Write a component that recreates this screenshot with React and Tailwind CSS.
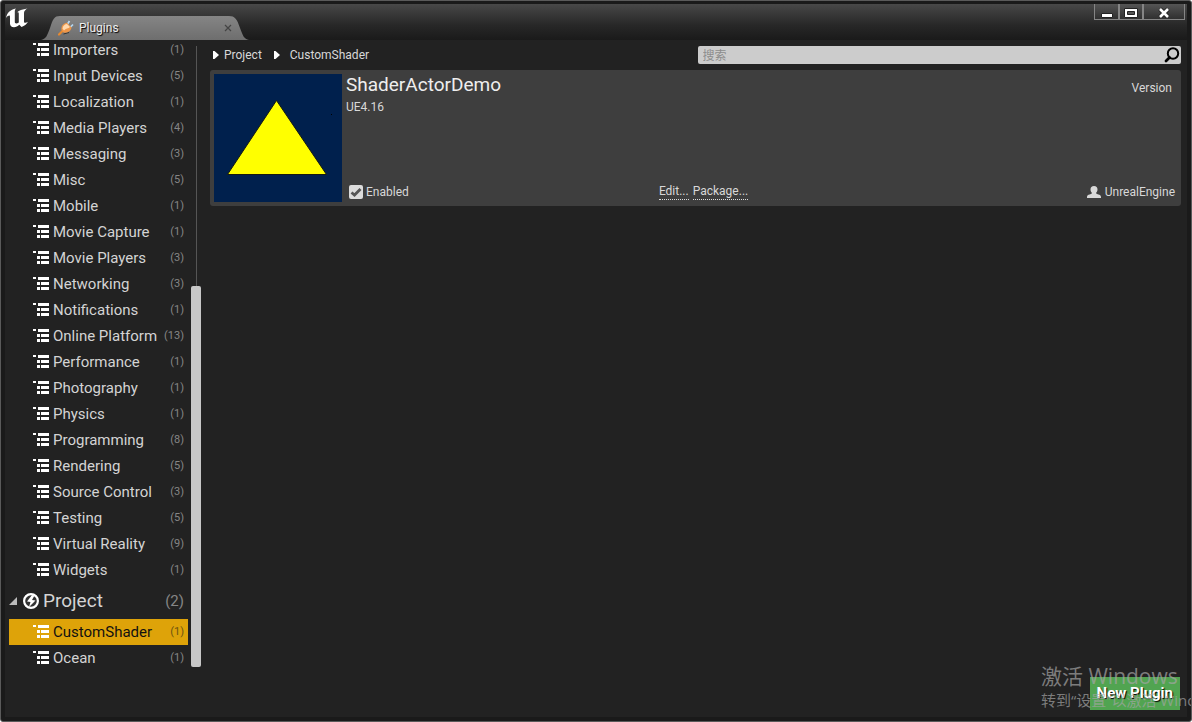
import React from 'react';

const categories = [
  ['Importers', 1],
  ['Input Devices', 5],
  ['Localization', 1],
  ['Media Players', 4],
  ['Messaging', 3],
  ['Misc', 5],
  ['Mobile', 1],
  ['Movie Capture', 1],
  ['Movie Players', 3],
  ['Networking', 3],
  ['Notifications', 1],
  ['Online Platform', 13],
  ['Performance', 1],
  ['Photography', 1],
  ['Physics', 1],
  ['Programming', 8],
  ['Rendering', 5],
  ['Source Control', 3],
  ['Testing', 5],
  ['Virtual Reality', 9],
  ['Widgets', 1],
];

function ListIcon() {
  return (
    <svg className="h-4 w-4 shrink-0" viewBox="0 0 16 16" fill="#fff" shapeRendering="crispEdges" aria-hidden="true">
      <path d="M0 1h3v2H0zM5 1h11v3H5zM4 6h3v3H4zM8 6h8v3H8zM4 11h3v3H4zM8 11h8v3H8z" />
    </svg>
  );
}

function CategoryRow({ name, count, selected }) {
  return (
    <li>
      <button
        type="button"
        aria-pressed={!!selected}
        className={
          'flex h-[26px] w-full items-center pl-6 pr-1 text-left ' +
          (selected ? 'bg-[#dea309] text-[#111]' : 'text-[#d4d4d4]')
        }
      >
        <ListIcon />
        <span className="ml-1 grow whitespace-nowrap text-[15px] leading-5">{name}</span>
        <span className={'text-[11px] ' + (selected ? 'text-[#6d5410]' : 'text-[#868686]')}>({count})</span>
      </button>
    </li>
  );
}

function Logo() {
  return (
    <svg className="h-6 w-6 shrink-0" viewBox="0 0 24 24" aria-label="Unreal Engine" role="img">
      <path
        fill="#fff"
        d="M1 10C2 5 5 1.500 11 0.500C10 1.500 9.800 2.500 9.800 4V14C10 15.700 11.500 16 13.800 14.500V5.500C13.800 4.300 13.200 4 12.200 4.200C14 2.500 17 1.500 22.500 0.500C20.500 1.500 19 3 19 5V13.500C19 15 20 15.500 23 13.800C21.500 16.500 19.500 18 16.500 19L14.300 16.800C12.800 18.300 11 19.300 9 19.300C6.500 19.300 5 17.800 5 15.500V9C5 7 3.500 7 1 10Z"
      />
    </svg>
  );
}

function PlugIcon() {
  return (
    <svg className="h-4 w-4 shrink-0" viewBox="0 0 16 16" aria-hidden="true">
      <path d="M9.500 4l2-3M12.500 7l2.500-2.500" stroke="#b5d8f2" strokeWidth="1.700" />
      <path d="M1 14.500L5 10.500" stroke="#e8892f" strokeWidth="2.200" strokeLinecap="round" />
      <path d="M5.500 14L11 12.500" stroke="#333" strokeWidth="1" />
      <path d="M3.500 10C2.800 6 5.500 3.200 9 2.800L13.500 7.500C13 11 9.500 13.500 5.500 12.500Z" fill="#ee9648" />
      <path d="M4.500 8.500C5 5.500 7 4.200 9 4L12 7C10.500 8.500 7.500 8.500 6 10.500Z" fill="#ffd9ae" />
    </svg>
  );
}

const controlClass =
  'flex h-4 items-center justify-center border border-t-0 border-[#858585] bg-linear-to-b from-[#555] to-[#303030]';

function TitleBar() {
  return (
    <header className="flex h-9 shrink-0 items-start bg-linear-to-b from-[#484848] via-[#272727] via-60% to-[#1a1a1a]">
      <div className="pt-1">
        <Logo />
      </div>
      <div className="relative ml-3 mt-3 flex h-6 w-[208px] items-center pl-[17px] pr-[15px]">
        <svg className="absolute inset-0 h-full w-full" viewBox="0 0 208 24" preserveAspectRatio="none" aria-hidden="true">
          <defs>
            <linearGradient id="tabFill" x2="0" y2="1">
              <stop stopColor="#858585" />
              <stop offset="1" stopColor="#6e6e6e" />
            </linearGradient>
          </defs>
          <path d="M0 24C5 23 6 20 9 12C12 3 13 0 19 0H188C194 0 196 3 199 12C202 20 203 23 208 24Z" fill="url(#tabFill)" />
        </svg>
        <div className="relative flex w-full items-center">
          <PlugIcon />
          <span className="ml-[5px] grow text-xs text-[#eee] [text-shadow:1px_1px_1px_#000]">Plugins</span>
          <button type="button" aria-label="Close tab" className="flex h-3 w-3 items-center justify-center">
            <svg className="h-2 w-2" viewBox="0 0 8 8" stroke="#444" strokeWidth="1.200" aria-hidden="true">
              <path d="M1 1L7 7M7 1L1 7" />
            </svg>
          </button>
        </div>
      </div>
      <div className="ml-auto mr-[2px] flex">
        <button type="button" aria-label="Minimize" className={controlClass + ' w-[25px]'}>
          <svg className="h-3 w-4" viewBox="0 0 16 12" aria-hidden="true">
            <path d="M2.500 7.500h11v4h-11z" fill="#fff" stroke="#222" />
          </svg>
        </button>
        <button type="button" aria-label="Maximize" className={controlClass + ' w-6'}>
          <svg className="h-3 w-4" viewBox="0 0 16 12" aria-hidden="true">
            <path d="M1.500 2.500h13v9h-13z" fill="#fff" stroke="#222" />
            <path d="M4.500 5.500h7v3h-7z" fill="#555" stroke="#222" />
          </svg>
        </button>
        <button type="button" aria-label="Close" className={controlClass + ' w-[42px]'}>
          <svg className="h-3 w-4" viewBox="0 0 16 12" aria-hidden="true">
            <path d="M4 3L12 11M12 3L4 11" stroke="#222" strokeWidth="4.500" />
            <path d="M4 3L12 11M12 3L4 11" stroke="#fff" strokeWidth="2.600" />
          </svg>
        </button>
      </div>
    </header>
  );
}

function Sidebar() {
  return (
    <nav aria-label="Plugin categories" className="flex shrink-0 gap-[3px] pl-1">
      <div className="w-[179px]">
        <ul className="-mt-[3px]">
          {categories.map(([name, count]) => (
            <CategoryRow key={name} name={name} count={count} />
          ))}
        </ul>
        <button type="button" aria-expanded="true" className="flex h-9 w-full items-center pr-1 text-left">
          <svg className="h-2 w-2 shrink-0" viewBox="0 0 8 8" fill="#bbb" aria-hidden="true">
            <path d="M8 0V8H0Z" />
          </svg>
          <svg className="ml-[6px] h-4 w-4 shrink-0" viewBox="0 0 16 16" aria-hidden="true">
            <circle cx="8" cy="8" r="6.900" fill="#333" stroke="#fff" strokeWidth="2.200" />
            <path d="M9 2L4 8.500L7.500 9L6 14L12.500 7.500L9 7L11.500 2.500Z" fill="#fff" />
          </svg>
          <span className="ml-1 grow text-[19px] leading-6 text-[#d4d4d4]">Project</span>
          <span className="text-[15px] text-[#868686]">(2)</span>
        </button>
        <ul>
          <CategoryRow name="CustomShader" count={1} selected />
          <CategoryRow name="Ocean" count={1} />
        </ul>
      </div>
      <div className="mt-[6px] flex w-[10px] flex-col items-center" aria-hidden="true">
        <div className="w-px grow bg-[#555]" />
        <div className="mb-1 h-[381px] w-full rounded-[2px] bg-[#c8c8c8]" />
      </div>
    </nav>
  );
}

function Arrow() {
  return (
    <svg className="h-2 w-[6px] shrink-0" viewBox="0 0 6 8" fill="#fff" aria-hidden="true">
      <path d="M0 0H1.500L6 4L1.500 8H0Z" />
    </svg>
  );
}

function PluginCard() {
  return (
    <article className="flex gap-1 rounded-[3px] bg-[#3e3e3e] p-1 text-xs text-[#d8d8d8]">
      <svg className="h-32 w-32 shrink-0" viewBox="0 0 128 128" role="img" aria-label="Plugin thumbnail">
        <path d="M0 0H128V128H0Z" fill="#00204d" />
        <path d="M62.500 26.500L112.500 100.500H13.500Z" fill="#ff0" stroke="#151a10" strokeWidth="1" />
        <path d="M117 40h1v1h-1z" fill="#000" />
      </svg>
      <div className="flex grow flex-col justify-between">
        <div className="flex justify-between">
          <div>
            <h1 className="text-[19px] leading-[22px] text-[#eee]">ShaderActorDemo</h1>
            <p className="mt-[3px] leading-4">UE4.16</p>
          </div>
          <span className="mr-[5px] mt-[6px] leading-4">Version</span>
        </div>
        <div className="grid grid-cols-[3fr_3fr_2fr] items-center pb-[2px] pr-[2px] leading-4">
          <label className="ml-[3px] flex items-center gap-[3px]">
            <span className="relative flex h-[14px] w-[14px]">
              <input type="checkbox" defaultChecked className="peer h-[14px] w-[14px] appearance-none rounded-[2px] bg-[#dcdcdc]" />
              <svg className="pointer-events-none absolute inset-0 hidden h-[14px] w-[14px] peer-checked:block" viewBox="0 0 14 14" fill="none" stroke="#555" strokeWidth="2.800" aria-hidden="true">
                <path d="M2.500 7.500L5.500 10L11.500 4" />
              </svg>
            </span>
            Enabled
          </label>
          <div className="flex gap-1 pl-[2px] leading-[15px]">
            <a href="#edit" className="border-b border-dotted border-[#ddd]">Edit...</a>
            <a href="#package" className="border-b border-dotted border-[#ddd]">Package...</a>
          </div>
          <div className="flex items-center justify-end gap-1">
            <svg className="h-3 w-[14px]" viewBox="0 0 14 12" fill="#d8d8d8" aria-hidden="true">
              <path d="M7 0C9.300 0 10.500 1.500 10.500 3.500C10.500 5 9.800 6.300 9 7C9 8.500 14 8 14 11V12H0V11C0 8 5 8.500 5 7C4.200 6.300 3.500 5 3.500 3.500C3.500 1.500 4.700 0 7 0Z" />
            </svg>
            UnrealEngine
          </div>
        </div>
      </div>
    </article>
  );
}

function Main() {
  return (
    <main className="flex min-w-0 grow flex-col gap-[5px] pl-[9px] pr-[6px] pt-[5px]">
      <div className="flex h-5 items-center justify-between">
        <nav aria-label="Breadcrumb" className="flex items-center pl-[3px] text-xs text-[#d8d8d8]">
          <Arrow />
          <a href="#project" className="ml-[5px] mr-3">Project</a>
          <Arrow />
          <a href="#customshader" className="ml-[10px]">CustomShader</a>
        </nav>
        <label className="flex h-[18px] w-[calc(50%-2px)] items-center rounded-[2px] bg-[#ccc] pl-[5px] pr-px">
          <input
            type="search"
            aria-label="搜索"
            placeholder="搜索"
            className="min-w-0 grow bg-transparent font-['Noto_Sans_CJK_SC',sans-serif] text-xs leading-4 text-black outline-none placeholder:text-[#8c8c8c]"
          />
          <svg className="h-4 w-4 shrink-0" viewBox="0 0 16 16" fill="none" stroke="#000" aria-hidden="true">
            <circle cx="9" cy="6.500" r="5.200" strokeWidth="2" />
            <path d="M5.500 10.500L2 14" strokeWidth="2.800" strokeLinecap="round" />
          </svg>
        </label>
      </div>
      <PluginCard />
    </main>
  );
}

export default function App() {
  return (
    <div className="relative flex min-h-screen flex-col overflow-hidden rounded-[3px] border border-[#5a5a5a] bg-[#1a1a1a] p-1 pt-[3px] font-['Roboto','Noto_Sans_CJK_SC',sans-serif]">
      <TitleBar />
      <div className="flex grow flex-col bg-[#222]">
        <div className="flex">
          <Sidebar />
          <Main />
        </div>
        <footer className="mt-[6px] flex justify-end pr-[7px]">
          <button type="button" className="h-[33px] bg-[#51a451] px-[7px] text-[15px] font-bold text-white [text-shadow:1px_1px_1px_#000]">
            New Plugin
          </button>
        </footer>
      </div>
      <div className="pointer-events-none absolute bottom-[11px] right-0 w-[150px] overflow-hidden whitespace-nowrap font-['Open_Sans','Noto_Sans_CJK_SC',sans-serif] text-[#a5a5a5]/70">
        <p className="text-[21px] leading-7">激活 Windows</p>
        <p className="text-[15px] leading-5">转到“设置”以激活 Windows。</p>
      </div>
    </div>
  );
}
